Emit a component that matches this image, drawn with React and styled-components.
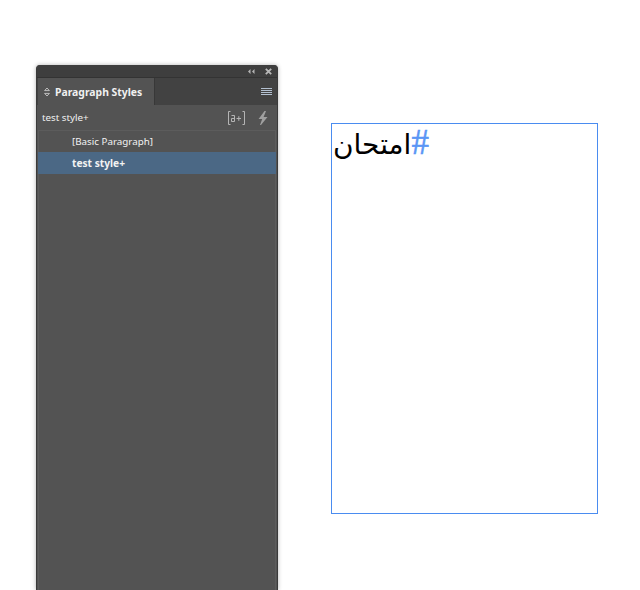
import styled, { createGlobalStyle } from 'styled-components';

const GlobalStyle = createGlobalStyle`
    html, body {
        margin: 0;
        background: #fff;
        height: 590px;
        overflow: hidden;
    }
`;

const Page = styled.div`
    display: flex;
    align-items: flex-start;
    padding: 65px 0 0 36px;
    height: 525px;
`;

const Panel = styled.div`
    width: 242px;
    height: 525px;
    flex: none;
    box-sizing: border-box;
    display: flex;
    flex-direction: column;
    background: #535353;
    border-radius: 4px 4px 0 0;
    border-left: 1px solid #3a3a3a;
    border-right: 1px solid #3a3a3a;
    box-shadow: 0 0 4px rgba(0, 0, 0, 0.3);
    font-family: "Noto Sans", sans-serif;
    color: #f0f0f0;
    overflow: hidden;
`;

const TitleBar = styled.div`
    height: 12px;
    background: #3e3e3e;
    border-bottom: 1px solid #333;
    display: flex;
    align-items: center;
    justify-content: flex-end;
    gap: 10px;
    padding-right: 5px;
`;

const TabRow = styled.div`
    height: 27px;
    background: #424242;
    display: flex;
    align-items: stretch;
    justify-content: space-between;
    padding-left: 1px;
    padding-right: 5px;
`;

const Tab = styled.div`
    width: 117px;
    background: #535353;
    border-right: 1px solid #383838;
    display: flex;
    align-items: center;
    gap: 5px;
    padding-left: 6px;
    box-sizing: border-box;
    font-size: 10.4px;
    font-weight: 700;
`;

const MenuButton = styled.div`
    display: flex;
    align-items: center;
`;

const ActiveRow = styled.div`
    height: 25px;
    display: flex;
    align-items: center;
    justify-content: space-between;
    padding: 0 9px 0 5px;
    font-size: 9.8px;
`;

const Tools = styled.div`
    display: flex;
    align-items: center;
    gap: 13px;
`;

const StyleList = styled.div`
    flex: 1;
    margin: 0 1px;
    border: 1px solid #5c5c5c;
    border-bottom: 0;
    background: #535353;
`;

const StyleRow = styled.div`
    height: ${p => (p.$selected ? '22px' : '21px')};
    margin: 0 -1px;
    display: flex;
    align-items: center;
    padding-left: 34px;
    font-size: ${p => (p.$selected ? '10.2px' : '9.8px')};
    font-weight: ${p => (p.$selected ? 700 : 400)};
    background: ${p => (p.$selected ? '#4b6885' : 'transparent')};
    color: #f2f2f2;
`;

const TextFrame = styled.div`
    width: 264px;
    height: 389px;
    margin: 58px 0 0 53px;
    flex: none;
    border: 1px solid #4a8cf0;
    padding-left: 1px;
    font-family: "DejaVu Sans", sans-serif;
    font-size: 28px;
    line-height: 42px;
    color: #000;
`;

const ArabicLine = styled.span`
    direction: rtl;
    unicode-bidi: isolate;
    display: inline-block;
`;

const Hash = styled.span`
    color: #5a96f5;
    font-family: "Liberation Serif", serif;
    font-size: 35px;
    line-height: 30px;
    -webkit-text-stroke: 0.5px #5a96f5;
`;

function CollapseIcon() {
    return (
        <svg width="8" height="7" viewBox="0 0 8 7">
            <path d="M3.5 1 L1 3.5 L3.5 6 Z M7.5 1 L5 3.5 L7.5 6 Z" fill="#b4b4b4" />
        </svg>
    );
}

function CloseIcon() {
    return (
        <svg width="7" height="7" viewBox="0 0 7 7">
            <path d="M0.8 0.8 L6.2 6.2 M6.2 0.8 L0.8 6.2" stroke="#b8b8b8" strokeWidth="1.8" />
        </svg>
    );
}

function SortIcon() {
    return (
        <svg width="6" height="10" viewBox="0 0 6 10" fill="none">
            <path d="M0.6 3.6 L3 1 L5.4 3.6 Z M0.6 6.4 L3 9 L5.4 6.4 Z" stroke="#d8d8d8" strokeWidth="0.8" />
        </svg>
    );
}

function MenuIcon() {
    return (
        <svg width="11" height="8" viewBox="0 0 11 8">
            <path d="M0 0.5 H11 M0 2.5 H11 M0 4.5 H11 M0 6.5 H11" stroke="#b3c0d0" strokeWidth="1" />
        </svg>
    );
}

function PlusStyleIcon() {
    return (
        <svg width="17" height="14" viewBox="0 0 17 14" fill="none" stroke="#b4b4b4" strokeWidth="1">
            <path d="M2.5 0.5 H0.5 V13.5 H2.5 M14.5 0.5 H16.5 V13.5 H14.5" />
            <path d="M3.5 4.5 H6.5 V10.5 H3.5 V7.5 H6.5" />
            <path d="M8.5 7.5 H13 M10.8 5.2 V9.8" />
        </svg>
    );
}

function BoltIcon() {
    return (
        <svg width="10" height="14" viewBox="0 0 10 14">
            <path d="M6.5 0 H8 L5.6 6 H9.5 L3 14 H2 L4.2 8 H0.6 Z" fill="#a0a0a0" />
        </svg>
    );
}

export default function App() {
    return (
        <Page>
            <GlobalStyle />
            <Panel>
                <TitleBar>
                    <CollapseIcon />
                    <CloseIcon />
                </TitleBar>
                <TabRow>
                    <Tab>
                        <SortIcon />
                        Paragraph Styles
                    </Tab>
                    <MenuButton>
                        <MenuIcon />
                    </MenuButton>
                </TabRow>
                <ActiveRow>
                    test style+
                    <Tools>
                        <PlusStyleIcon />
                        <BoltIcon />
                    </Tools>
                </ActiveRow>
                <StyleList>
                    <StyleRow>[Basic Paragraph]</StyleRow>
                    <StyleRow $selected>test style+</StyleRow>
                </StyleList>
            </Panel>
            <TextFrame>
                <ArabicLine><Hash>#</Hash>امتحان</ArabicLine>
            </TextFrame>
        </Page>
    );
}
